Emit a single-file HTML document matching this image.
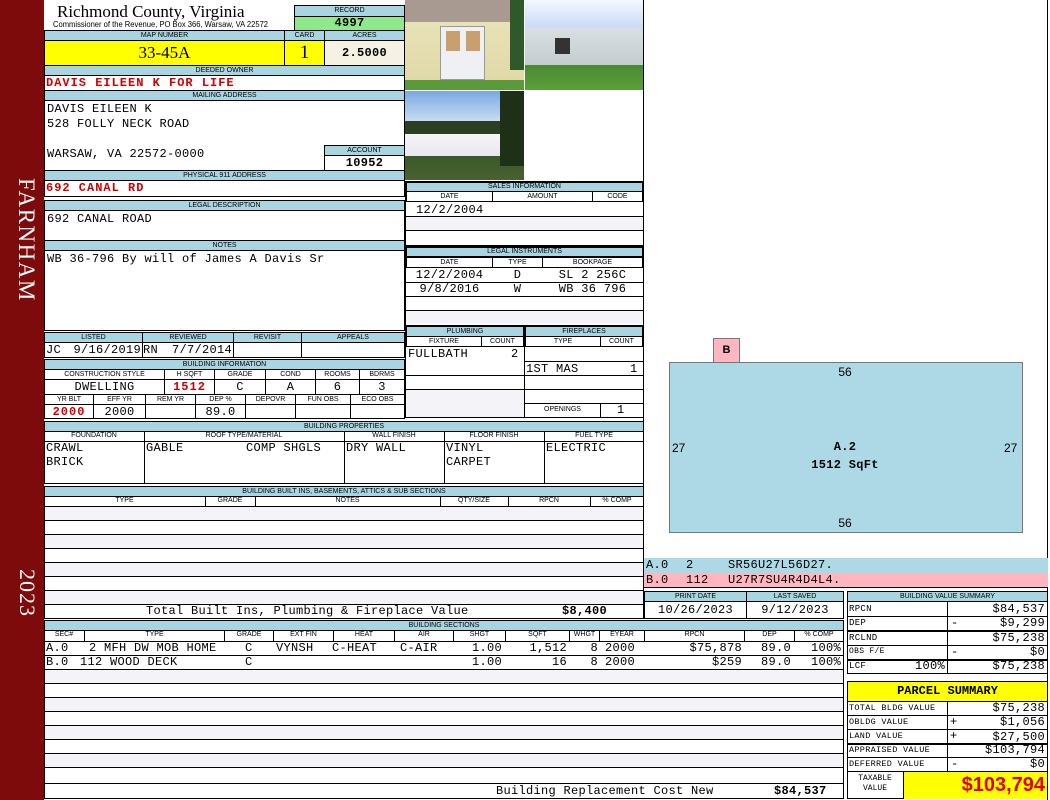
<!DOCTYPE html>
<html><head><meta charset="utf-8"><style>
*{margin:0;padding:0;box-sizing:border-box}
body{width:1050px;height:800px;position:relative;background:#fff;overflow:hidden;font-family:"Liberation Mono",monospace;font-size:11px;color:#000}
div{position:absolute}
.b{border:1px solid #000}
.l{background:#a9d5e2;border:1px solid #000;font-family:"Liberation Sans",sans-serif;font-size:7px;text-align:center;line-height:8px;text-transform:uppercase;overflow:hidden;white-space:nowrap}
.m{font-family:"Liberation Mono",monospace;font-size:12px;letter-spacing:0.3px;line-height:14px;white-space:nowrap}
.r{color:#d00000;font-weight:bold;letter-spacing:1px}
.c{text-align:center}
.rt{text-align:right}
.hl{height:1px;background:#000}
.vl{width:1px;background:#000}
.g{background:#f4f4f8}
</style></head><body>
<!-- sidebar -->
<div style="left:0;top:0;width:44px;height:800px;background:#7d0b0b"></div>
<div style="left:7px;top:178px;width:32px;height:160px;color:#fff;font-family:'Liberation Serif',serif;font-size:23px;writing-mode:vertical-rl;letter-spacing:1.5px">FARNHAM</div>
<div style="left:8px;top:569px;width:32px;height:60px;color:#fff;font-family:'Liberation Serif',serif;font-size:22px;writing-mode:vertical-rl;letter-spacing:1px">2023</div>
<div class="vl" style="left:1047px;top:0;height:800px"></div>

<!-- header -->
<div style="left:57px;top:2px;font-family:'Liberation Serif',serif;font-size:17px;line-height:20px;white-space:nowrap">Richmond County, Virginia</div>
<div style="left:53px;top:20px;font-family:'Liberation Sans',sans-serif;font-size:8px;white-space:nowrap;transform:scaleX(0.95);transform-origin:left">Commissioner of the Revenue, PO Box 366, Warsaw, VA 22572</div>
<div class="l" style="left:294px;top:5px;width:111px;height:12px;line-height:10px">RECORD</div>
<div class="b m c" style="left:294px;top:16px;width:111px;height:15px;background:#8fe88a;font-weight:bold;line-height:13px">4997</div>

<div class="l" style="left:44px;top:30px;width:241px;height:11px;line-height:9px">MAP NUMBER</div>
<div class="l" style="left:284px;top:30px;width:41px;height:11px;line-height:9px">CARD</div>
<div class="l" style="left:324px;top:30px;width:81px;height:11px;line-height:9px">ACRES</div>
<div class="b c" style="left:44px;top:40px;width:241px;height:26px;background:#ffff00;font-family:'Liberation Serif',serif;font-size:17px;line-height:24px">33-45A</div>
<div class="b c" style="left:284px;top:40px;width:41px;height:26px;background:#ffff00;font-family:'Liberation Serif',serif;font-size:19px;line-height:24px">1</div>
<div class="b m c" style="left:324px;top:40px;width:81px;height:26px;background:#f5f2e4;font-weight:bold;line-height:24px">2.5000</div>

<div class="l" style="left:44px;top:65px;width:361px;height:11px;line-height:9px">DEEDED OWNER</div>
<div class="b" style="left:44px;top:75px;width:361px;height:16px"></div>
<div class="m r" style="left:46px;top:76px">DAVIS EILEEN K FOR LIFE</div>
<div class="l" style="left:44px;top:90px;width:361px;height:11px;line-height:9px">MAILING ADDRESS</div>
<div class="b" style="left:44px;top:100px;width:361px;height:71px"></div>
<div class="m" style="left:47px;top:102px">DAVIS EILEEN K</div>
<div class="m" style="left:47px;top:117px">528 FOLLY NECK ROAD</div>
<div class="m" style="left:47px;top:147px">WARSAW, VA 22572-0000</div>
<div class="l" style="left:324px;top:145px;width:81px;height:11px;line-height:9px">ACCOUNT</div>
<div class="b m c" style="left:324px;top:155px;width:81px;height:16px;font-weight:bold;line-height:14px">10952</div>
<div class="l" style="left:44px;top:170px;width:361px;height:11px;line-height:9px">PHYSICAL 911 ADDRESS</div>
<div class="b" style="left:44px;top:180px;width:361px;height:17px"></div>
<div class="m r" style="left:46px;top:181px">692 CANAL RD</div>

<div class="l" style="left:44px;top:200px;width:361px;height:11px;line-height:9px">LEGAL DESCRIPTION</div>
<div class="b" style="left:44px;top:210px;width:361px;height:31px"></div>
<div class="m" style="left:47px;top:212px">692 CANAL ROAD</div>
<div class="l" style="left:44px;top:240px;width:361px;height:11px;line-height:9px">NOTES</div>
<div class="b" style="left:44px;top:250px;width:361px;height:81px"></div>
<div class="m" style="left:47px;top:252px">WB 36-796 By will of James A Davis Sr</div>

<!-- listed -->
<div class="l" style="left:44px;top:332px;width:99px;height:11px;line-height:9px">LISTED</div>
<div class="l" style="left:142px;top:332px;width:92px;height:11px;line-height:9px">REVIEWED</div>
<div class="l" style="left:233px;top:332px;width:69px;height:11px;line-height:9px">REVISIT</div>
<div class="l" style="left:301px;top:332px;width:104px;height:11px;line-height:9px">APPEALS</div>
<div class="b" style="left:44px;top:342px;width:99px;height:16px"></div>
<div class="b" style="left:142px;top:342px;width:92px;height:16px"></div>
<div class="b" style="left:233px;top:342px;width:69px;height:16px"></div>
<div class="b" style="left:301px;top:342px;width:104px;height:16px"></div>
<div class="m" style="left:46px;top:343px">JC</div>
<div class="m rt" style="left:60px;top:343px;width:81px">9/16/2019</div>
<div class="m" style="left:143px;top:343px">RN</div>
<div class="m rt" style="left:160px;top:343px;width:72px">7/7/2014</div>

<!-- building info -->
<div class="l" style="left:44px;top:359px;width:361px;height:11px;line-height:9px">BUILDING INFORMATION</div>
<div class="l" style="left:44px;top:369px;width:121px;height:11px;line-height:9px;background:#fff">CONSTRUCTION STYLE</div>
<div class="l" style="left:164px;top:369px;width:51px;height:11px;line-height:9px;background:#fff">H SQFT</div>
<div class="l" style="left:214px;top:369px;width:52px;height:11px;line-height:9px;background:#fff">GRADE</div>
<div class="l" style="left:265px;top:369px;width:51px;height:11px;line-height:9px;background:#fff">COND</div>
<div class="l" style="left:315px;top:369px;width:45px;height:11px;line-height:9px;background:#fff">ROOMS</div>
<div class="l" style="left:359px;top:369px;width:46px;height:11px;line-height:9px;background:#fff">BDRMS</div>
<div class="b m c" style="left:44px;top:379px;width:121px;height:16px">DWELLING</div>
<div class="b m c r" style="left:164px;top:379px;width:51px;height:16px">1512</div>
<div class="b m c" style="left:214px;top:379px;width:52px;height:16px">C</div>
<div class="b m c" style="left:265px;top:379px;width:51px;height:16px">A</div>
<div class="b m c" style="left:315px;top:379px;width:45px;height:16px">6</div>
<div class="b m c" style="left:359px;top:379px;width:46px;height:16px">3</div>
<div class="l" style="left:44px;top:394px;width:50px;height:11px;line-height:9px;background:#fff">YR BLT</div>
<div class="l" style="left:93px;top:394px;width:53px;height:11px;line-height:9px;background:#fff">EFF YR</div>
<div class="l" style="left:145px;top:394px;width:51px;height:11px;line-height:9px;background:#fff">REM YR</div>
<div class="l" style="left:195px;top:394px;width:51px;height:11px;line-height:9px;background:#fff">DEP %</div>
<div class="l" style="left:245px;top:394px;width:51px;height:11px;line-height:9px;background:#fff">DEPOVR</div>
<div class="l" style="left:295px;top:394px;width:56px;height:11px;line-height:9px;background:#fff">FUN OBS</div>
<div class="l" style="left:350px;top:394px;width:55px;height:11px;line-height:9px;background:#fff">ECO OBS</div>
<div class="b m c r" style="left:44px;top:404px;width:50px;height:15px">2000</div>
<div class="b m c" style="left:93px;top:404px;width:53px;height:15px">2000</div>
<div class="b" style="left:145px;top:404px;width:51px;height:15px"></div>
<div class="b m c" style="left:195px;top:404px;width:51px;height:15px">89.0</div>
<div class="b" style="left:245px;top:404px;width:51px;height:15px"></div>
<div class="b" style="left:295px;top:404px;width:56px;height:15px"></div>
<div class="b" style="left:350px;top:404px;width:55px;height:15px"></div>

<!-- photos -->
<div style="left:405px;top:0;width:119px;height:90px;background:linear-gradient(#a89a90 0,#a89a90 22px,#e8e2b8 22px,#e0d9a8 80px,#5a9a3a 80px)"></div>
<div style="left:440px;top:26px;width:45px;height:54px;background:#eef0f4;border:1px solid #999"></div>
<div style="left:446px;top:31px;width:14px;height:20px;background:#c8a070"></div>
<div style="left:466px;top:31px;width:14px;height:20px;background:#c8a070"></div>
<div style="left:510px;top:0;width:14px;height:70px;background:#2e5a2a"></div>
<div style="left:525px;top:0;width:119px;height:90px;background:linear-gradient(#f4f8ff 0,#c8dcf4 28px,#d8e0e4 28px,#c4ccd0 65px,#4a8a30 65px,#5aa03a 90px)"></div>
<div style="left:555px;top:38px;width:15px;height:16px;background:#333"></div>
<div style="left:405px;top:91px;width:119px;height:89px;background:linear-gradient(#7aa8e0 0,#c8dcf4 30px,#2a4020 30px,#2a4020 43px,#f4f4f8 43px,#e8e8ee 65px,#3a5a28 65px,#4a6030 89px)"></div>
<div style="left:500px;top:91px;width:24px;height:75px;background:#1e3018"></div>
<div class="vl" style="left:643px;top:0;height:619px"></div>

<!-- sales -->
<div class="b" style="left:405px;top:181px;width:239px;height:65px"></div>
<div class="l" style="left:406px;top:182px;width:237px;height:10px;line-height:8px">SALES INFORMATION</div>
<div class="l" style="left:406px;top:191px;width:87px;height:11px;line-height:9px;background:#fff">DATE</div>
<div class="l" style="left:492px;top:191px;width:101px;height:11px;line-height:9px;background:#fff">AMOUNT</div>
<div class="l" style="left:592px;top:191px;width:51px;height:11px;line-height:9px;background:#fff">CODE</div>
<div class="m" style="left:416px;top:203px">12/2/2004</div>
<div class="hl" style="left:406px;top:216px;width:237px"></div>
<div class="g" style="left:406px;top:217px;width:237px;height:13px"></div>
<div class="hl" style="left:406px;top:230px;width:237px"></div>

<div class="b" style="left:405px;top:246px;width:239px;height:80px"></div>
<div class="l" style="left:406px;top:247px;width:237px;height:10px;line-height:8px">LEGAL INSTRUMENTS</div>
<div class="l" style="left:406px;top:257px;width:87px;height:11px;line-height:9px;background:#fff">DATE</div>
<div class="l" style="left:492px;top:257px;width:51px;height:11px;line-height:9px;background:#fff">TYPE</div>
<div class="l" style="left:542px;top:257px;width:101px;height:11px;line-height:9px;background:#fff">BOOKPAGE</div>
<div class="m c" style="left:406px;top:268px;width:87px">12/2/2004</div>
<div class="m c" style="left:492px;top:268px;width:51px">D</div>
<div class="m c" style="left:542px;top:268px;width:101px">SL 2 256C</div>
<div class="hl" style="left:406px;top:282px;width:237px"></div>
<div class="m c" style="left:406px;top:282px;width:87px">9/8/2016</div>
<div class="m c" style="left:492px;top:282px;width:51px">W</div>
<div class="m c" style="left:542px;top:282px;width:101px">WB 36 796</div>
<div class="hl" style="left:406px;top:296px;width:237px"></div>
<div class="hl" style="left:406px;top:310px;width:237px"></div>
<div class="g" style="left:406px;top:311px;width:237px;height:13px"></div>

<!-- plumbing -->
<div class="b" style="left:405px;top:325px;width:120px;height:93px"></div>
<div class="b" style="left:524px;top:325px;width:120px;height:93px"></div>
<div class="l" style="left:406px;top:326px;width:118px;height:11px;line-height:9px">PLUMBING</div>
<div class="l" style="left:525px;top:326px;width:118px;height:11px;line-height:9px">FIREPLACES</div>
<div class="l" style="left:406px;top:336px;width:76px;height:11px;line-height:9px;background:#fff">FIXTURE</div>
<div class="l" style="left:481px;top:336px;width:43px;height:11px;line-height:9px;background:#fff">COUNT</div>
<div class="l" style="left:525px;top:336px;width:76px;height:11px;line-height:9px;background:#fff">TYPE</div>
<div class="l" style="left:600px;top:336px;width:43px;height:11px;line-height:9px;background:#fff">COUNT</div>
<div class="m" style="left:408px;top:347px">FULLBATH</div><div class="m" style="left:511px;top:347px">2</div>
<div class="hl" style="left:525px;top:361px;width:118px"></div>
<div class="m" style="left:526px;top:362px">1ST MAS</div><div class="m" style="left:630px;top:362px">1</div>
<div class="hl" style="left:406px;top:375px;width:237px"></div>
<div class="hl" style="left:406px;top:389px;width:237px"></div>
<div class="g" style="left:406px;top:390px;width:118px;height:27px"></div>
<div class="hl" style="left:525px;top:403px;width:118px"></div>
<div class="vl" style="left:600px;top:403px;height:14px"></div>
<div style="left:525px;top:406px;width:75px;font-family:'Liberation Sans',sans-serif;font-size:7px;text-align:center">OPENINGS</div>
<div class="m" style="left:617px;top:403px">1</div>

<!-- building properties -->
<div class="l" style="left:44px;top:421px;width:600px;height:11px;line-height:9px">BUILDING PROPERTIES</div>
<div class="b" style="left:44px;top:431px;width:600px;height:53px"></div>
<div class="hl" style="left:44px;top:441px;width:600px"></div>
<div class="vl" style="left:144px;top:431px;height:52px"></div>
<div class="vl" style="left:344px;top:431px;height:52px"></div>
<div class="vl" style="left:444px;top:431px;height:52px"></div>
<div class="vl" style="left:544px;top:431px;height:52px"></div>
<div style="left:44px;top:432px;width:100px;font-family:'Liberation Sans',sans-serif;font-size:7px;text-align:center">FOUNDATION</div>
<div style="left:144px;top:432px;width:200px;font-family:'Liberation Sans',sans-serif;font-size:7px;text-align:center">ROOF TYPE/MATERIAL</div>
<div style="left:344px;top:432px;width:100px;font-family:'Liberation Sans',sans-serif;font-size:7px;text-align:center">WALL FINISH</div>
<div style="left:444px;top:432px;width:100px;font-family:'Liberation Sans',sans-serif;font-size:7px;text-align:center">FLOOR FINISH</div>
<div style="left:544px;top:432px;width:100px;font-family:'Liberation Sans',sans-serif;font-size:7px;text-align:center">FUEL TYPE</div>
<div class="m" style="left:46px;top:441px">CRAWL<br>BRICK</div>
<div class="m" style="left:146px;top:441px">GABLE</div>
<div class="m" style="left:246px;top:441px">COMP SHGLS</div>
<div class="m" style="left:346px;top:441px">DRY WALL</div>
<div class="m" style="left:446px;top:441px">VINYL<br>CARPET</div>
<div class="m" style="left:546px;top:441px">ELECTRIC</div>

<!-- built ins -->
<div class="l" style="left:44px;top:486px;width:600px;height:11px;line-height:9px">BUILDING BUILT INS, BASEMENTS, ATTICS &amp; SUB SECTIONS</div>
<div class="b" style="left:44px;top:496px;width:600px;height:123px"></div>
<div class="hl" style="left:44px;top:506px;width:600px"></div>
<div class="vl" style="left:205px;top:496px;height:10px"></div>
<div class="vl" style="left:255px;top:496px;height:10px"></div>
<div class="vl" style="left:440px;top:496px;height:10px"></div>
<div class="vl" style="left:508px;top:496px;height:10px"></div>
<div class="vl" style="left:590px;top:496px;height:10px"></div>
<div style="left:44px;top:497px;width:161px;font-family:'Liberation Sans',sans-serif;font-size:7px;text-align:center">TYPE</div>
<div style="left:205px;top:497px;width:50px;font-family:'Liberation Sans',sans-serif;font-size:7px;text-align:center">GRADE</div>
<div style="left:255px;top:497px;width:185px;font-family:'Liberation Sans',sans-serif;font-size:7px;text-align:center">NOTES</div>
<div style="left:440px;top:497px;width:68px;font-family:'Liberation Sans',sans-serif;font-size:7px;text-align:center">QTY/SIZE</div>
<div style="left:508px;top:497px;width:82px;font-family:'Liberation Sans',sans-serif;font-size:7px;text-align:center">RPCN</div>
<div style="left:590px;top:497px;width:54px;font-family:'Liberation Sans',sans-serif;font-size:7px;text-align:center">% COMP</div>
<div class="g" style="left:45px;top:507px;width:598px;height:13px"></div>
<div class="hl" style="left:44px;top:520px;width:600px"></div>
<div class="hl" style="left:44px;top:534px;width:600px"></div>
<div class="g" style="left:45px;top:535px;width:598px;height:13px"></div>
<div class="hl" style="left:44px;top:548px;width:600px"></div>
<div class="hl" style="left:44px;top:562px;width:600px"></div>
<div class="g" style="left:45px;top:563px;width:598px;height:13px"></div>
<div class="hl" style="left:44px;top:576px;width:600px"></div>
<div class="hl" style="left:44px;top:590px;width:600px"></div>
<div class="g" style="left:45px;top:591px;width:598px;height:13px"></div>
<div class="hl" style="left:44px;top:604px;width:600px"></div>
<div class="m" style="left:146px;top:604px">Total Built Ins, Plumbing &amp; Fireplace Value</div>
<div class="m" style="left:562px;top:604px;font-weight:bold">$8,400</div>

<!-- sketch -->
<div style="left:669px;top:362px;width:354px;height:171px;background:#add8e6;border:1px solid #777"></div>
<div style="left:713px;top:338px;width:27px;height:25px;background:#ffb6c1;border:1px solid #777;font-family:'Liberation Sans',sans-serif;font-size:11px;font-weight:bold;text-align:center;line-height:23px">B</div>
<div style="left:830px;top:365px;width:30px;font-family:'Liberation Sans',sans-serif;font-size:12px;text-align:center">56</div>
<div style="left:830px;top:516px;width:30px;font-family:'Liberation Sans',sans-serif;font-size:12px;text-align:center">56</div>
<div style="left:672px;top:441px;font-family:'Liberation Sans',sans-serif;font-size:12px">27</div>
<div style="left:1004px;top:441px;font-family:'Liberation Sans',sans-serif;font-size:12px">27</div>
<div class="m c" style="left:795px;top:440px;width:100px;font-weight:bold">A.2</div>
<div class="m c" style="left:795px;top:458px;width:100px;font-weight:bold">1512 SqFt</div>
<div class="hl" style="left:644px;top:558px;width:404px"></div>
<div style="left:644px;top:558px;width:404px;height:15px;background:#add8e6"></div>
<div style="left:644px;top:573px;width:404px;height:15px;background:#ffb6c1"></div>
<div class="m" style="left:646px;top:558px">A.0</div><div class="m" style="left:686px;top:558px">2</div><div class="m" style="left:728px;top:558px">SR56U27L56D27.</div>
<div class="m" style="left:646px;top:573px">B.0</div><div class="m" style="left:686px;top:573px">112</div><div class="m" style="left:728px;top:573px">U27R7SU4R4D4L4.</div>
<div class="hl" style="left:644px;top:587px;width:404px"></div>

<!-- print date -->
<div class="l" style="left:644px;top:591px;width:103px;height:11px;line-height:9px">PRINT DATE</div>
<div class="l" style="left:746px;top:591px;width:98px;height:11px;line-height:9px">LAST SAVED</div>
<div class="b m c" style="left:644px;top:601px;width:103px;height:18px;font-size:12px;line-height:16px">10/26/2023</div>
<div class="b m c" style="left:746px;top:601px;width:98px;height:18px;font-size:12px;line-height:16px">9/12/2023</div>

<!-- building sections -->
<div class="l" style="left:44px;top:620px;width:800px;height:11px;line-height:9px">BUILDING SECTIONS</div>
<div class="b" style="left:44px;top:630px;width:800px;height:169px"></div>
<div class="hl" style="left:44px;top:641px;width:800px"></div>
<div style="left:44px;top:631px;width:800px;height:10px;font-family:'Liberation Sans',sans-serif;font-size:7px">
<div style="left:0;width:41px;text-align:center;border-right:1px solid #000;height:10px">SEC#</div>
<div style="left:41px;width:140px;text-align:center;border-right:1px solid #000;height:10px">TYPE</div>
<div style="left:181px;width:49px;text-align:center;border-right:1px solid #000;height:10px">GRADE</div>
<div style="left:230px;width:60px;text-align:center;border-right:1px solid #000;height:10px">EXT FIN</div>
<div style="left:290px;width:61px;text-align:center;border-right:1px solid #000;height:10px">HEAT</div>
<div style="left:351px;width:59px;text-align:center;border-right:1px solid #000;height:10px">AIR</div>
<div style="left:410px;width:52px;text-align:center;border-right:1px solid #000;height:10px">SHGT</div>
<div style="left:462px;width:64px;text-align:center;border-right:1px solid #000;height:10px">SQFT</div>
<div style="left:526px;width:30px;text-align:center;border-right:1px solid #000;height:10px">WHGT</div>
<div style="left:556px;width:45px;text-align:center;border-right:1px solid #000;height:10px">EYEAR</div>
<div style="left:601px;width:100px;text-align:center;border-right:1px solid #000;height:10px">RPCN</div>
<div style="left:701px;width:50px;text-align:center;border-right:1px solid #000;height:10px">DEP</div>
<div style="left:751px;width:48px;text-align:center;height:10px">% COMP</div>
</div>
<div class="m" style="left:46px;top:641px">A.0</div>
<div class="m" style="left:89px;top:641px">2 MFH DW MOB HOME</div>
<div class="m" style="left:245px;top:641px">C</div>
<div class="m" style="left:276px;top:641px">VYNSH</div>
<div class="m" style="left:332px;top:641px">C-HEAT</div>
<div class="m" style="left:400px;top:641px">C-AIR</div>
<div class="m rt" style="left:454px;top:641px;width:48px">1.00</div>
<div class="m rt" style="left:506px;top:641px;width:61px">1,512</div>
<div class="m rt" style="left:570px;top:641px;width:28px">8</div>
<div class="m" style="left:605px;top:641px">2000</div>
<div class="m rt" style="left:645px;top:641px;width:97px">$75,878</div>
<div class="m rt" style="left:745px;top:641px;width:46px">89.0</div>
<div class="m rt" style="left:795px;top:641px;width:46px">100%</div>
<div class="hl" style="left:44px;top:655px;width:800px"></div>
<div class="m" style="left:46px;top:655px">B.0</div>
<div class="m" style="left:80px;top:655px">112 WOOD DECK</div>
<div class="m" style="left:245px;top:655px">C</div>
<div class="m rt" style="left:454px;top:655px;width:48px">1.00</div>
<div class="m rt" style="left:506px;top:655px;width:61px">16</div>
<div class="m rt" style="left:570px;top:655px;width:28px">8</div>
<div class="m" style="left:605px;top:655px">2000</div>
<div class="m rt" style="left:645px;top:655px;width:97px">$259</div>
<div class="m rt" style="left:745px;top:655px;width:46px">89.0</div>
<div class="m rt" style="left:795px;top:655px;width:46px">100%</div>
<div class="hl" style="left:44px;top:669px;width:800px"></div>
<div class="g" style="left:45px;top:670px;width:798px;height:13px"></div>
<div class="hl" style="left:44px;top:683px;width:800px"></div>
<div class="hl" style="left:44px;top:697px;width:800px"></div>
<div class="g" style="left:45px;top:698px;width:798px;height:13px"></div>
<div class="hl" style="left:44px;top:711px;width:800px"></div>
<div class="hl" style="left:44px;top:725px;width:800px"></div>
<div class="g" style="left:45px;top:726px;width:798px;height:13px"></div>
<div class="hl" style="left:44px;top:739px;width:800px"></div>
<div class="hl" style="left:44px;top:753px;width:800px"></div>
<div class="g" style="left:45px;top:754px;width:798px;height:13px"></div>
<div class="hl" style="left:44px;top:767px;width:800px"></div>
<div class="hl" style="left:44px;top:783px;width:800px"></div>
<div class="m" style="left:496px;top:784px">Building Replacement Cost New</div>
<div class="m" style="left:774px;top:784px;font-weight:bold">$84,537</div>

<!-- building value summary -->
<div class="l" style="left:847px;top:591px;width:201px;height:11px;line-height:9px">BUILDING VALUE SUMMARY</div>
<div class="b" style="left:847px;top:601px;width:201px;height:73px"></div>
<div class="vl" style="left:947px;top:601px;height:72px"></div>
<div class="hl" style="left:847px;top:616px;width:201px"></div>
<div class="hl" style="left:847px;top:630px;width:201px;height:2px"></div>
<div class="hl" style="left:847px;top:645px;width:201px"></div>
<div class="hl" style="left:847px;top:659px;width:201px;height:2px"></div>
<div class="m" style="left:849px;top:602px;font-size:9px">RPCN</div><div class="m rt" style="left:950px;top:602px;width:95px">$84,537</div>
<div class="m" style="left:849px;top:616px;font-size:9px">DEP</div><div class="m" style="left:951px;top:616px">-</div><div class="m rt" style="left:950px;top:616px;width:95px">$9,299</div>
<div class="m" style="left:849px;top:631px;font-size:9px">RCLND</div><div class="m rt" style="left:950px;top:631px;width:95px">$75,238</div>
<div class="m" style="left:849px;top:645px;font-size:8px">OBS F/E</div><div class="m" style="left:951px;top:645px">-</div><div class="m rt" style="left:950px;top:645px;width:95px">$0</div>
<div class="m" style="left:849px;top:659px;font-size:9px">LCF</div><div class="m rt" style="left:880px;top:659px;width:65px">100%</div><div class="m rt" style="left:950px;top:659px;width:95px">$75,238</div>

<!-- parcel summary -->
<div class="b" style="left:847px;top:681px;width:201px;height:21px;background:#ffff00;font-family:'Liberation Mono',monospace;font-weight:bold;font-size:12px;text-align:center;line-height:19px">PARCEL SUMMARY</div>
<div class="b" style="left:847px;top:701px;width:201px;height:98px"></div>
<div class="vl" style="left:947px;top:701px;height:71px"></div>
<div class="hl" style="left:847px;top:715px;width:201px"></div>
<div class="hl" style="left:847px;top:729px;width:201px"></div>
<div class="hl" style="left:847px;top:743px;width:201px;height:2px"></div>
<div class="hl" style="left:847px;top:757px;width:201px"></div>
<div class="hl" style="left:847px;top:771px;width:201px"></div>
<div class="m" style="left:849px;top:701px;font-size:8.5px">TOTAL BLDG VALUE</div><div class="m rt" style="left:950px;top:701px;width:95px">$75,238</div>
<div class="m" style="left:849px;top:715px;font-size:8.5px">OBLDG VALUE</div><div class="m" style="left:950px;top:715px">+</div><div class="m rt" style="left:950px;top:715px;width:95px">$1,056</div>
<div class="m" style="left:849px;top:729px;font-size:8.5px">LAND VALUE</div><div class="m" style="left:950px;top:729px">+</div><div class="m rt" style="left:950px;top:730px;width:95px">$27,500</div>
<div class="m" style="left:849px;top:743px;font-size:8.5px">APPRAISED VALUE</div><div class="m rt" style="left:950px;top:743px;width:95px">$103,794</div>
<div class="m" style="left:849px;top:757px;font-size:8.5px">DEFERRED VALUE</div><div class="m" style="left:951px;top:757px">-</div><div class="m rt" style="left:950px;top:757px;width:95px">$0</div>
<div style="left:903px;top:772px;width:144px;height:27px;background:#ffff00;border-left:1px solid #000"></div>
<div class="c" style="left:849px;top:774px;width:52px;font-size:8px;line-height:10px">TAXABLE<br>VALUE</div>
<div class="rt" style="left:905px;top:772px;width:140px;font-family:'Liberation Sans',sans-serif;font-weight:bold;font-size:20px;color:#e00000;line-height:27px">$103,794</div>
</body></html>
